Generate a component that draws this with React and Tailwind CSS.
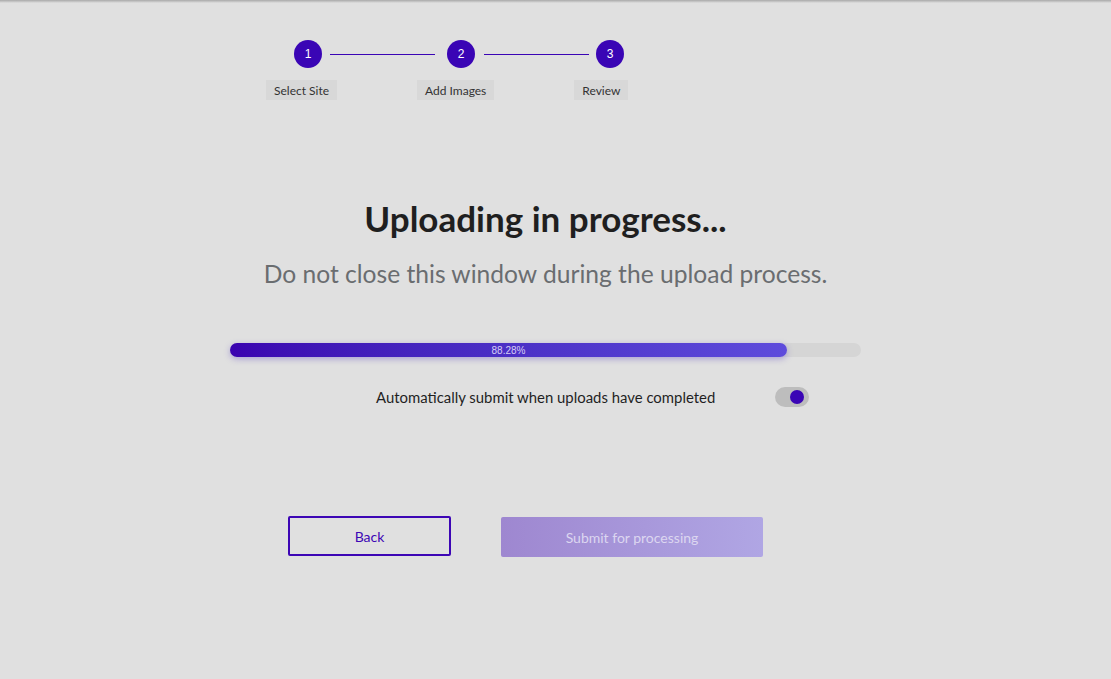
import React from "react";

function Circle({ n }) {
  return (
    <div className="w-7 h-7 rounded-full bg-[#3a05b5] text-white text-[12px] flex items-center justify-center flex-shrink-0 font-['Liberation_Sans',sans-serif]">
      {n}
    </div>
  );
}

function Label({ children }) {
  return (
    <div className="h-5 px-2 pt-px bg-[#d8d8d8] text-[12px] text-[#333] flex items-center leading-none">
      {children}
    </div>
  );
}

export default function App() {
  return (
    <div className="w-[1111px] h-[679px] bg-[#e0e0e0] font-['Lato',sans-serif] overflow-hidden">
      <div className="h-[3px] bg-gradient-to-b from-[#a9a9a9] to-[#e0e0e0]" />
      {/* Stepper */}
      <div className="pt-[37px] pl-[294px] flex items-center">
        <Circle n="1" />
        <div className="ml-2 w-[105px] h-px bg-[#3a05b5]" />
        <div className="ml-3">
          <Circle n="2" />
        </div>
        <div className="ml-[9px] w-[105px] h-px bg-[#3a05b5]" />
        <div className="ml-[7px]">
          <Circle n="3" />
        </div>
      </div>
      <div className="mt-3 pl-[266px] flex items-center">
        <Label>Select Site</Label>
        <div className="ml-[80px]">
          <Label>Add Images</Label>
        </div>
        <div className="ml-[80px]">
          <Label>Review</Label>
        </div>
      </div>

      {/* Main content */}
      <div className="w-[1091px] flex flex-col items-center">
        <h1 className="mt-[96px] text-[35px] font-bold text-[#1f1f1f] leading-[44px]">
          Uploading in progress...
        </h1>
        <p className="mt-[18px] text-[24.6px] text-[#6a6d70] leading-[32px]">
          Do not close this window during the upload process.
        </p>

        <div className="mt-[53px] w-[631px] h-[14px] rounded-full bg-[#d5d5d5] flex">
          <div
            className="h-full rounded-full bg-gradient-to-r from-[#3a02b0] to-[#5e4bdc] shadow-[0_2px_6px_rgba(70,40,190,0.35)] flex items-center justify-center text-[10px] text-[#d6cdf5] font-['Liberation_Sans',sans-serif]"
            style={{ width: "88.28%" }}
          >
            88.28%
          </div>
        </div>

        <div className="mt-[29px] w-[433px] ml-[94px] flex items-center justify-between">
          <span className="text-[14.9px] text-[#1f1f1f]">
            Automatically submit when uploads have completed
          </span>
          <div className="w-[34px] h-5 rounded-full bg-[#bdbdbd] flex items-center justify-end pr-[5px]">
            <div className="w-[14px] h-[14px] rounded-full bg-[#3a05b5]" />
          </div>
        </div>

        <div className="mt-[108px] w-[475px] flex items-start justify-between ml-[-40px]">
          <button className="w-[163px] h-10 border-2 border-[#3d06b5] rounded-[2px] text-[#3d06b5] text-[14px]">
            Back
          </button>
          <button className="mt-px w-[262px] h-10 rounded-[2px] bg-gradient-to-r from-[#9e87d0] to-[#b0a6e4] text-[#dcd6f0] text-[14px]">
            Submit for processing
          </button>
        </div>
      </div>
    </div>
  );
}
